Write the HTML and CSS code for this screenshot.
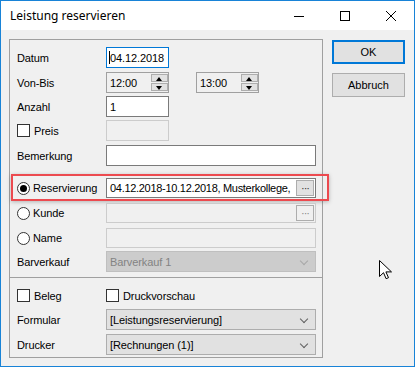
FILE: index.html
```html
<!DOCTYPE html>
<html lang="de">
<head>
  <meta charset="UTF-8">
  <title>Leistung reservieren</title>
  <link rel="stylesheet" href="styles.css">
</head>
<body>
  <div class="fenster">
    <div class="titelleiste">
      <span class="titel">Leistung reservieren</span>
      <div class="titel-knoepfe">
        <svg width="46" height="29" viewBox="0 0 46 29"><path d="M18 15.5h10" stroke="#000" stroke-width="1"/></svg>
        <svg width="46" height="29" viewBox="0 0 46 29"><rect x="18.5" y="10.5" width="9" height="9" fill="none" stroke="#000" stroke-width="1"/></svg>
        <svg width="46" height="29" viewBox="0 0 46 29"><path d="M18 10l10 10M28 10l-10 10" stroke="#000" stroke-width="1"/></svg>
      </div>
    </div>

    <div class="inhalt">
      <div class="gruppe">
        <div class="zeilen">
          <div class="zeile">
            <label>Datum</label>
            <div class="feld fokus">04.12.2018</div>
          </div>
          <div class="zeile plus">
            <label>Von-Bis</label>
            <div class="feld zeit">12:00<span class="spin"><i class="hoch"></i><i class="runter"></i></span></div>
            <div class="feld zeit zweite">13:00<span class="spin"><i class="hoch"></i><i class="runter"></i></span></div>
          </div>
          <div class="zeile">
            <label>Anzahl</label>
            <div class="feld">1</div>
          </div>
          <div class="zeile">
            <label><span class="kasten"></span>Preis</label>
            <div class="feld inaktiv"></div>
          </div>
          <div class="zeile plus">
            <label>Bemerkung</label>
            <div class="feld breit"></div>
          </div>

          <div class="zeile abstand">
            <label><span class="radio an"></span>Reservierung</label>
            <div class="feld breit mit-knopf eng">04.12.2018-10.12.2018, Musterkollege,<span class="punkte">···</span></div>
            <div class="markierung"></div>
          </div>
          <div class="zeile klein">
            <label><span class="radio"></span>Kunde</label>
            <div class="feld breit inaktiv mit-knopf"><span class="punkte">···</span></div>
          </div>
          <div class="zeile klein">
            <label><span class="radio"></span>Name</label>
            <div class="feld breit inaktiv"></div>
          </div>
          <div class="zeile">
            <label>Barverkauf</label>
            <div class="feld breit auswahl gesperrt">Barverkauf 1<span class="pfeil"></span></div>
          </div>
        </div>

        <div class="trenner"></div>

        <div class="zeilen unten">
          <div class="zeile haken">
            <label><span class="kasten"></span>Beleg</label>
            <label><span class="kasten"></span>Druckvorschau</label>
          </div>
          <div class="zeile">
            <label>Formular</label>
            <div class="feld breit auswahl">[Leistungsreservierung]<span class="pfeil"></span></div>
          </div>
          <div class="zeile">
            <label>Drucker</label>
            <div class="feld breit auswahl">[Rechnungen (1)]<span class="pfeil"></span></div>
          </div>
        </div>
      </div>

      <div class="knoepfe">
        <button class="standard">OK</button>
        <button>Abbruch</button>
      </div>
    </div>

    <svg class="zeiger" width="14" height="22" viewBox="0 0 14 22">
      <path d="M0.5 0.5v16l4-3.8 2.6 6 2.4-1-2.6-5.8h5.6z" fill="#fff" stroke="#000" stroke-width="1"/>
    </svg>
  </div>
</body>
</html>
```

FILE: styles.css
```css
/* Fenster */
* {
  box-sizing: border-box;
}

body {
  margin: 0;
  font-family: "Liberation Sans", Arial, sans-serif;
  font-size: 11px;
  letter-spacing: -0.1px;
  color: #000;
}

.fenster {
  position: relative;
  width: 415px;
  height: 367px;
  border: 1px solid #1883d7;
  background-color: #f0f0f0;
}

.titelleiste {
  height: 29px;
  background-color: #fff;
  display: flex;
  align-items: center;
  justify-content: space-between;
}

.titel {
  font-family: "Noto Sans", sans-serif;
  font-size: 12px;
  letter-spacing: 0;
  padding-left: 9px;
  padding-bottom: 1px;
}

.titel-knoepfe {
  display: flex;
}

.titel-knoepfe svg {
  display: block;
}

/* Inhalt */
.inhalt {
  display: flex;
  padding: 9px 8px 0 8px;
  gap: 9px;
}

.gruppe {
  width: 314px;
  height: 319px;
  border: 1px solid #a0a0a0;
}

.zeilen {
  display: flex;
  flex-direction: column;
  gap: 3px;
  padding: 7px 5px 0 7px;
}

.zeilen.unten {
  padding-top: 10px;
  gap: 4px;
}

.zeile {
  position: relative;
  display: flex;
  align-items: center;
  height: 21px;
}

.zeile.plus {
  margin-top: 1px;
}

.zeile.klein {
  height: 20px;
  margin-top: 2px;
}

.zeile.abstand {
  margin-top: 9px;
  height: 20px;
}

.zeile.haken {
  height: 15px;
  margin-bottom: 2px;
}

.zeile label {
  width: 89px;
  flex-shrink: 0;
  display: flex;
  align-items: center;
}

.haken label:last-child {
  width: auto;
}

/* Eingabefelder */
.feld {
  position: relative;
  width: 63px;
  height: 100%;
  border: 1px solid #7a7a7a;
  background-color: #fff;
  padding: 0 3px;
  display: flex;
  align-items: center;
  white-space: nowrap;
  overflow: hidden;
}

.feld.fokus {
  border-color: #0078d7;
  padding-left: 2px;
}

.feld.fokus::before {
  content: "";
  width: 1px;
  height: 13px;
  background-color: #000;
}

.feld.breit {
  width: 210px;
}

.feld.eng {
  letter-spacing: -0.3px;
}

.feld.inaktiv {
  background-color: #f0f0f0;
  border-color: #cccccc;
}

.feld.zeit {
  background-color: #f0f0f0;
  border-color: #a0a0a0;
  padding-right: 0;
}

.feld.zweite {
  margin-left: 27px;
}

.spin {
  position: absolute;
  right: 0;
  top: 0;
  bottom: 0;
  width: 17px;
  display: flex;
  flex-direction: column;
  gap: 1px;
  padding: 1px 0;
}

.spin i {
  flex: 1;
  background-color: #e1e1e1;
  border: 1px solid #adadad;
  position: relative;
}

.spin i::after {
  content: "";
  position: absolute;
  left: 4px;
  border-left: 3.5px solid transparent;
  border-right: 3.5px solid transparent;
}

.spin .hoch::after {
  top: 2px;
  border-bottom: 4px solid #000;
}

.spin .runter::after {
  top: 2px;
  border-top: 4px solid #000;
}

.mit-knopf {
  padding-right: 18px;
}

.punkte {
  position: absolute;
  right: 1px;
  top: 1px;
  bottom: 1px;
  width: 18px;
  background-color: #e1e1e1;
  border: 1px solid #adadad;
  display: flex;
  justify-content: center;
  align-items: center;
  font-size: 11px;
  letter-spacing: -1px;
  color: #333;
}

.inaktiv .punkte {
  background-color: #f0f0f0;
  color: #888;
}

.auswahl {
  background-color: #e1e1e1;
  border-color: #adadad;
}

.auswahl.gesperrt {
  background-color: #cccccc;
  border-color: #bfbfbf;
  color: #838383;
}

.pfeil {
  position: absolute;
  right: 8px;
  top: 6px;
  width: 6px;
  height: 6px;
  border-right: 1px solid #606060;
  border-bottom: 1px solid #606060;
  transform: rotate(45deg);
}

.gesperrt .pfeil {
  border-color: #a8a8a8;
}

/* Kontrollkaesten */
.kasten {
  width: 13px;
  height: 13px;
  border: 1px solid #333;
  background-color: #fff;
  margin-right: 4px;
}

.radio {
  width: 13px;
  height: 13px;
  border: 1px solid #333;
  border-radius: 50%;
  background-color: #fff;
  margin-right: 3px;
  display: flex;
  align-items: center;
  justify-content: center;
}

.radio.an::after {
  content: "";
  width: 7px;
  height: 7px;
  border-radius: 50%;
  background-color: #000;
}

.markierung {
  position: absolute;
  left: -6px;
  top: -4px;
  width: 318px;
  height: 27px;
  border: 2px solid #ec4a4f;
  box-shadow: 0 1px 4px rgba(0, 0, 0, 0.25);
  pointer-events: none;
}

.trenner {
  height: 1px;
  background-color: #a0a0a0;
  margin-top: 5px;
}

/* Knoepfe rechts */
.knoepfe {
  display: flex;
  flex-direction: column;
  gap: 9px;
  padding-top: 1px;
}

.knoepfe button {
  width: 73px;
  height: 24px;
  background-color: #e1e1e1;
  border: 1px solid #adadad;
  font-family: "Liberation Sans", Arial, sans-serif;
  font-size: 11px;
  color: #000;
  padding: 0;
}

.knoepfe button.standard {
  border: 2px solid #0078d7;
}

.zeiger {
  position: absolute;
  left: 378px;
  top: 259px;
}
```
